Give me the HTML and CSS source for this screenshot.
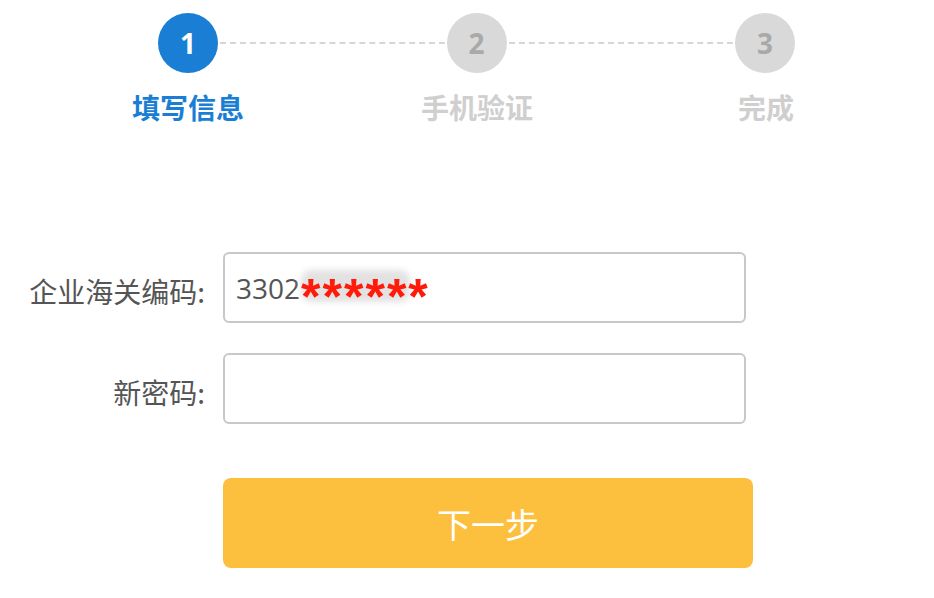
FILE: index.html
```html
<!DOCTYPE html>
<html lang="zh-CN">
<head>
  <meta charset="utf-8">
  <meta name="viewport" content="width=device-width,initial-scale=1">
  <title>找回密码</title>
  <link rel="stylesheet" href="styles.css">
</head>
<body>
  <header class="steps">
    <div class="step-dots">
      <span class="dot active">1</span>
      <span class="dash"></span>
      <span class="dot">2</span>
      <span class="dash"></span>
      <span class="dot">3</span>
    </div>
    <div class="step-names">
      <span class="name active">填写信息</span>
      <span class="name">手机验证</span>
      <span class="name">完成</span>
    </div>
  </header>

  <main class="form">
    <div class="row">
      <label for="code">企业海关编码:</label>
      <div class="field" id="code">3302<span class="mask">******</span></div>
    </div>
    <div class="row">
      <label for="pwd">新密码:</label>
      <div class="field" id="pwd"></div>
    </div>
    <div class="row">
      <span></span>
      <button class="next">下一步</button>
    </div>
  </main>
</body>
</html>
```

FILE: styles.css
```css
:root {
  --blue: #1a7fd4;
  --gray: #d9d9d9;
  --muted: #cfcfcf;
  --text: #555;
  --border: #c8c8c8;
  --yellow: #fdbf3e;
}
* {
  box-sizing: border-box;
  margin: 0;
  padding: 0;
}
body {
  background: #fff;
  color: var(--text);
  font-family: "Noto Sans CJK SC", "Noto Sans", sans-serif;
  width: 934px;
  height: 598px;
  overflow: hidden;
}

/* steps */
.steps {
  padding-top: 13px;
}
.step-dots {
  display: flex;
  align-items: center;
  margin-left: 158px;
  width: 637px;
}
.dot {
  width: 60px;
  height: 60px;
  border-radius: 50%;
  background: var(--gray);
  color: #a9a9a9;
  font-family: "Open Sans", sans-serif;
  font-weight: 700;
  font-size: 28px;
  display: flex;
  align-items: center;
  justify-content: center;
  flex: none;
}
.dot.active {
  background: var(--blue);
  color: #fff;
}
.dash {
  flex: 1;
  border-top: 2px dashed #d6d6d6;
  margin: 0 2px;
}
.step-names {
  display: flex;
  margin-left: 108px;
  gap: 129px;
  margin-top: 16px;
}
.name {
  width: 160px;
  text-align: center;
  font-size: 28px;
  font-weight: 700;
  line-height: 36px;
  color: var(--muted);
}
.name.active { color: var(--blue); }

/* form */
.form {
  margin-top: 127px;
  display: flex;
  flex-direction: column;
  gap: 30px;
}
.row {
  display: grid;
  grid-template-columns: 212px 530px;
  column-gap: 11px;
  align-items: center;
}
.row label {
  text-align: right;
  padding-right: 7px;
  padding-top: 6px;
  font-size: 28px;
  color: var(--text);
}
.field {
  width: 523px;
  height: 71px;
  border: 2px solid var(--border);
  border-radius: 6px;
  padding-left: 11px;
  font-family: "Open Sans", sans-serif;
  font-size: 28px;
  color: var(--text);
  display: flex;
  align-items: center;
}
.mask {
  position: relative;
  z-index: 0;
  color: #ff1a0a;
  font-family: "Liberation Sans", sans-serif;
  font-weight: 700;
  font-size: 50px;
  line-height: 1;
  letter-spacing: 2px;
  margin-left: 1px;
  padding-top: 18px;
}
.mask::before {
  content: "";
  position: absolute;
  left: 0;
  right: 20px;
  top: 16px;
  height: 32px;
  background: #e2e2e2;
  border-radius: 10px;
  filter: blur(3px);
  z-index: -1;
}
.next {
  margin-top: 24px;
  width: 530px;
  height: 90px;
  border: none;
  border-radius: 8px;
  background: var(--yellow);
  color: #fff;
  font-family: "Noto Sans CJK SC", sans-serif;
  font-size: 34px;
  cursor: pointer;
}
```
